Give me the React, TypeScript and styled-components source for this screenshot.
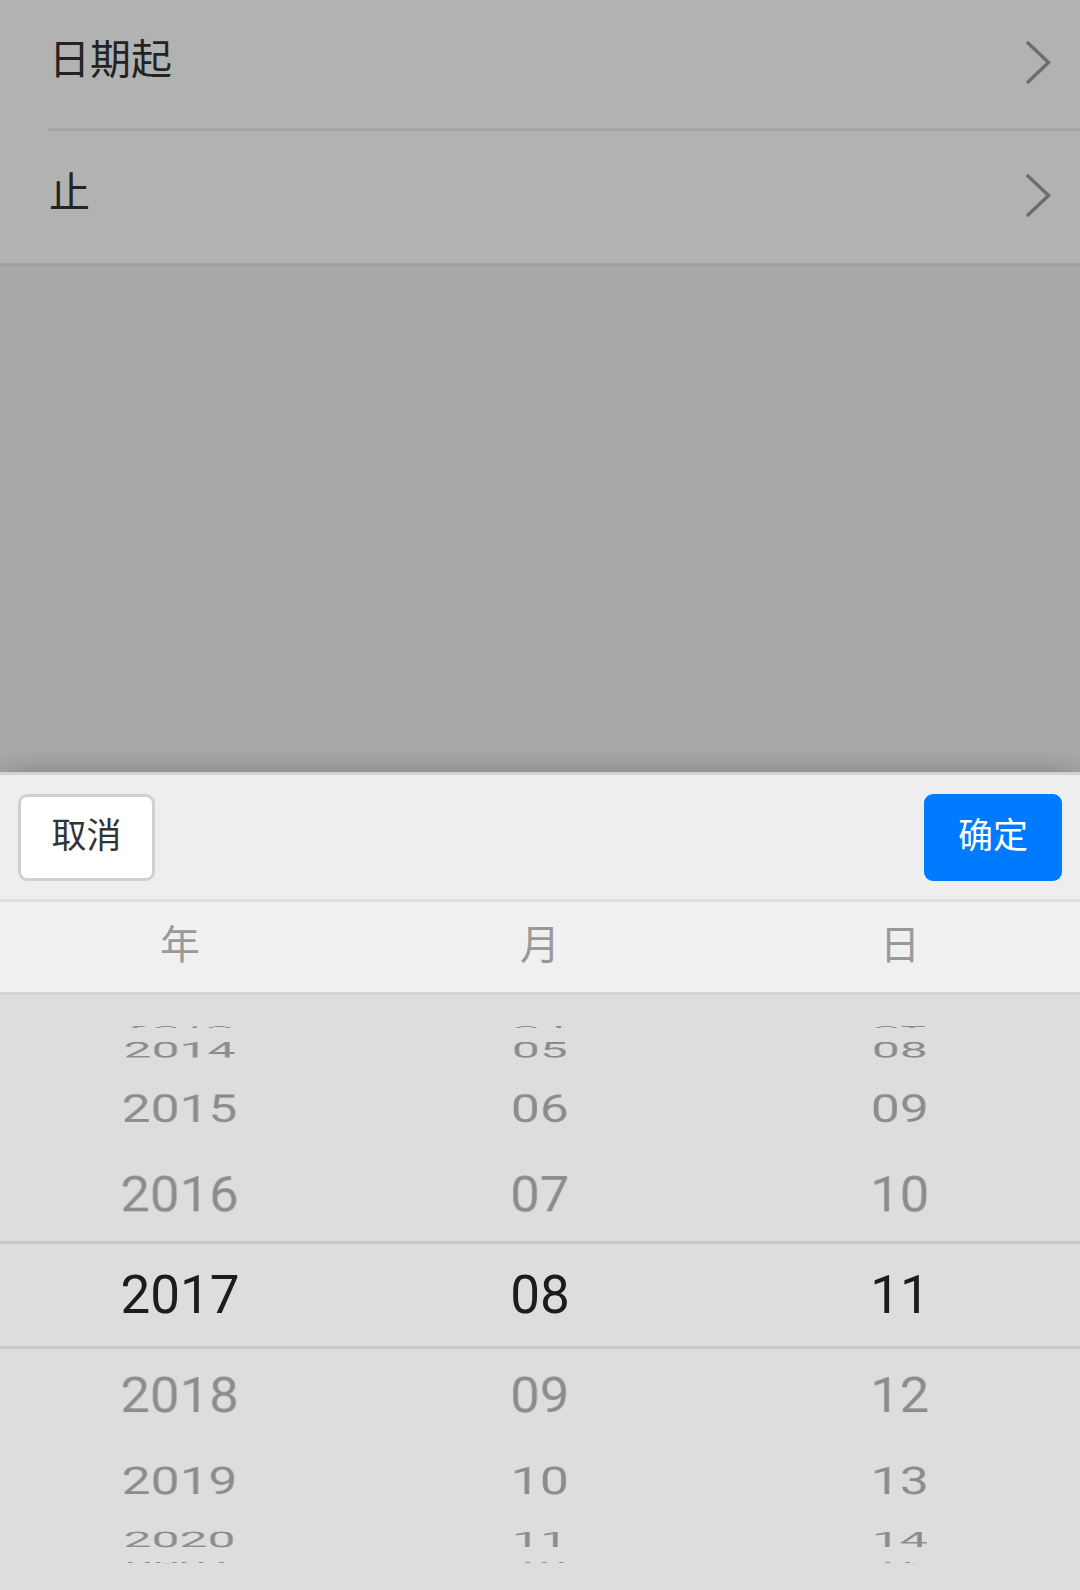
import React from "react";
import styled, { createGlobalStyle } from "styled-components";

const GlobalStyle = createGlobalStyle`
  html, body {
    margin: 0;
    padding: 0;
    background: #f3f3f3;
    font-family: Roboto, "Noto Sans CJK SC", "Noto Sans", sans-serif;
  }
  * { box-sizing: border-box; }
`;

const CJK = `"Noto Sans CJK SC", "Noto Sans", sans-serif`;

const Page = styled.div`
  min-height: 1590px;
  background: #f3f3f3;
`;

const List = styled.div`
  background: #ffffff;
  border-bottom: 3px solid #e8e8e8;
`;

const Row = styled.div`
  display: flex;
  padding-left: 48px;
`;

const RowBody = styled.div<{ $divider?: boolean; $h: number }>`
  flex: 1;
  display: flex;
  align-items: center;
  justify-content: space-between;
  height: ${(p) => p.$h}px;
  padding-right: 29px;
  padding-bottom: 16px;
  border-bottom: ${(p) => (p.$divider ? "3px solid #ececec" : "none")};
  box-sizing: content-box;
`;

const Label = styled.span`
  font-family: ${CJK};
  font-size: 41px;
  color: #333333;
  margin-left: 1px;
`;

const Chevron = styled.svg`
  width: 26px;
  height: 45px;
  margin-top: 12px;
  display: block;
`;

const Mask = styled.div`
  position: fixed;
  inset: 0;
  background: rgba(0, 0, 0, 0.3);
`;

const Sheet = styled.div`
  position: fixed;
  left: 0;
  right: 0;
  top: 772px;
  background: #dddddd;
  border-top: 3px solid #d3d3d3;
  box-shadow: 0 -3px 28px rgba(0, 0, 0, 0.22);
  display: flex;
  flex-direction: column;
`;

const Toolbar = styled.div`
  height: 127px;
  display: flex;
  align-items: center;
  justify-content: space-between;
  padding: 0 18px;
  background: #eeeeee;
  border-bottom: 3px solid #e0e0e0;
`;

const Button = styled.button<{ $primary?: boolean }>`
  width: ${(p) => (p.$primary ? 138 : 137)}px;
  height: 87px;
  border-radius: 9px;
  border: ${(p) => (p.$primary ? "none" : "3px solid #d0d0d0")};
  background: ${(p) => (p.$primary ? "#007aff" : "#ffffff")};
  color: ${(p) => (p.$primary ? "#ffffff" : "#333333")};
  font-family: ${CJK};
  font-size: 35px;
  display: flex;
  align-items: center;
  justify-content: center;
  padding: 0 0 10px 0;
  cursor: pointer;
`;

const HeaderRow = styled.div`
  height: 93px;
  display: grid;
  grid-template-columns: repeat(3, 1fr);
  background: #f0f0f0;
  border-bottom: 3px solid #d6d6d6;
`;

const HeaderCell = styled.div`
  display: flex;
  align-items: center;
  justify-content: center;
  font-family: ${CJK};
  font-size: 40px;
  color: #999999;
  padding-bottom: 10px;
`;

const Body = styled.div`
  display: grid;
  height: 600px;
  overflow: hidden;
`;

const Columns = styled.div`
  grid-area: 1 / 1;
  display: grid;
  grid-template-columns: repeat(3, 1fr);
`;

const Band = styled.div`
  grid-area: 1 / 1;
  align-self: center;
  height: 108px;
  border-top: 3px solid #c9c9c9;
  border-bottom: 3px solid #c9c9c9;
  pointer-events: none;
`;

const Wheel = styled.div`
  display: grid;
  place-items: center;
  height: 600px;
`;

const Item = styled.div<{ $active: boolean }>`
  grid-area: 1 / 1;
  height: 104px;
  line-height: 104px;
  font-family: Roboto, "Noto Sans", sans-serif;
  font-size: 53px;
  color: ${(p) => (p.$active ? "#1c1c1c" : "#8c8c8c")};
  transform-origin: 50% 50% -268px;
  backface-visibility: hidden;
  white-space: nowrap;
`;

const STEP = 22;

const range = (start: number, count: number, pad: boolean) =>
  Array.from({ length: count }, (_, i) => {
    const v = start + i;
    return pad ? String(v).padStart(2, "0") : String(v);
  });

const columns = [
  range(2013, 9, false),
  range(4, 9, true),
  range(7, 9, true),
];

const itemTransform = (k: number) => {
  const angle = -k * STEP;
  const shrink = 1 - 0.1 * (1 - Math.cos((angle * Math.PI) / 180));
  return `rotateX(${angle}deg) scaleX(${shrink.toFixed(3)})`;
};

const ChevronIcon = () => (
  <Chevron viewBox="0 0 26 45">
    <path d="M2 2 L23.5 22.5 L2 43" fill="none" stroke="#9d9d9d" strokeWidth="3.4" />
  </Chevron>
);

export default function App() {
  return (
    <>
      <GlobalStyle />
      <Page>
        <List>
          <Row>
            <RowBody $divider $h={112}>
              <Label>日期起</Label>
              <ChevronIcon />
            </RowBody>
          </Row>
          <Row>
            <RowBody $h={116}>
              <Label>止</Label>
              <ChevronIcon />
            </RowBody>
          </Row>
        </List>
      </Page>
      <Mask />
      <Sheet>
        <Toolbar>
          <Button>取消</Button>
          <Button $primary>确定</Button>
        </Toolbar>
        <HeaderRow>
          <HeaderCell>年</HeaderCell>
          <HeaderCell>月</HeaderCell>
          <HeaderCell>日</HeaderCell>
        </HeaderRow>
        <Body>
          <Columns>
            {columns.map((items, ci) => (
              <Wheel key={ci}>
                {items.map((v, i) => {
                  const k = i - 4;
                  return (
                    <Item key={v} $active={k === 0} style={{ transform: itemTransform(k) }}>
                      {v}
                    </Item>
                  );
                })}
              </Wheel>
            ))}
          </Columns>
          <Band />
        </Body>
      </Sheet>
    </>
  );
}
